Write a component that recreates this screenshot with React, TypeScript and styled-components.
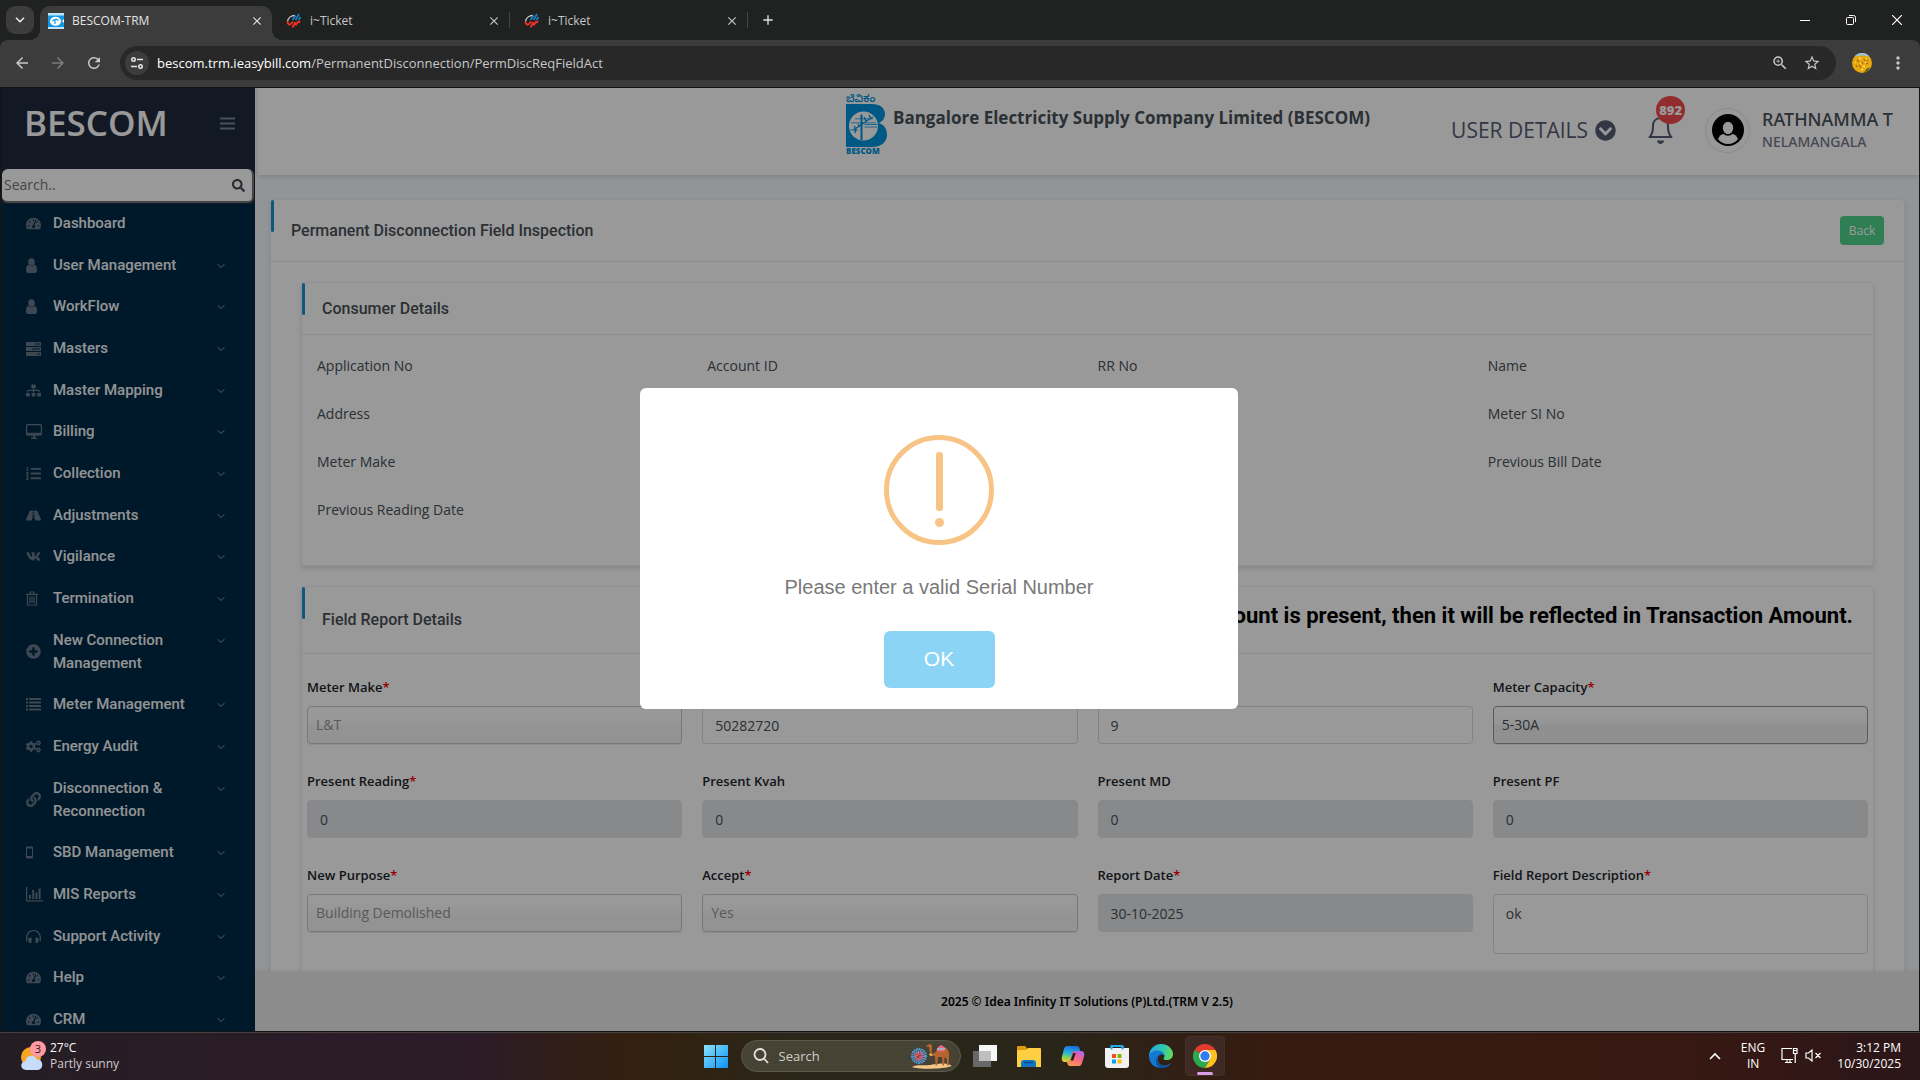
import React from 'react';
import styled, { createGlobalStyle, css } from 'styled-components';
import {
  FaTachometerAlt, FaSitemap, FaListOl, FaRoad, FaVk,
  FaPlusCircle, FaCogs, FaLink, FaHeadphonesAlt, FaChevronCircleDown,
  FaSearch,
} from 'react-icons/fa';
import { FiChevronDown } from 'react-icons/fi';
import {
  MdArrowBack, MdArrowForward, MdRefresh, MdStarBorder, MdMoreVert, MdOutlineZoomIn, MdClose, MdAdd,
} from 'react-icons/md';

const ui = `"Open Sans", "Noto Sans", sans-serif`;
const noto = `"Noto Sans", "Open Sans", sans-serif`;
const roboto = `Roboto, "Liberation Sans", sans-serif`;
const arial = `"Liberation Sans", Arial, sans-serif`;

const GlobalStyle = createGlobalStyle`
  *, *::before, *::after { box-sizing: border-box; }
  body { margin: 0; background: #202121; font-family: ${ui}; overflow: hidden; }
  button, input, select, textarea { font: inherit; margin: 0; }
  button { border: 0; padding: 0; background: none; color: inherit; cursor: pointer; }
  h1, h2, h3, p, ul, dl, dt, dd { margin: 0; padding: 0; }
  a { color: inherit; text-decoration: none; }
  svg { display: block; flex: none; }
`;

const Screen = styled.div`
  display: flex;
  flex-direction: column;
  height: 100vh;
`;

/* ---------- browser frame ---------- */

const TabStrip = styled.div`
  display: flex;
  align-items: center;
  height: 40px;
  padding: 0 6px;
  background: #202121;
  color: #e3e3e3;
`;

const TabSearch = styled.button`
  display: grid;
  place-items: center;
  width: 28px;
  height: 28px;
  margin-right: 6px;
  border-radius: 9px;
  background: #3c3c3c;
`;

const Tab = styled.div<{ $active?: boolean }>`
  position: relative;
  display: flex;
  align-items: center;
  gap: 8px;
  width: ${p => (p.$active ? 232 : 237)}px;
  height: 34px;
  margin-top: 6px;
  padding: 0 8px 5px ${p => (p.$active ? 8 : 14)}px;
  border-radius: 10px 10px 0 0;
  font-size: 12px;
  line-height: 16px;
  background: ${p => (p.$active ? '#3c3c3c' : 'transparent')};
  color: ${p => (p.$active ? '#e3e3e3' : '#c7c7c7')};
  ${p => p.$active && css`
    &::before, &::after {
      content: '';
      position: absolute;
      bottom: 0;
      width: 10px;
      height: 10px;
    }
    &::before { left: -10px; background: radial-gradient(circle at 0 0, transparent 10px, #3c3c3c 10px); }
    &::after { right: -10px; background: radial-gradient(circle at 100% 0, transparent 10px, #3c3c3c 10px); }
  `}
`;

const TabTitle = styled.span`
  flex: 1;
`;

const TabRule = styled.span`
  width: 1px;
  height: 16px;
  background: #444646;
`;

const NewTab = styled.button`
  margin-left: 12px;
`;

const WindowButtons = styled.div`
  display: flex;
  gap: 36px;
  margin-left: auto;
  padding-right: 12px;
`;

const Toolbar = styled.div`
  display: flex;
  align-items: center;
  height: 47px;
  padding: 0 14px 2px;
  border-radius: 8px 8px 0 0;
  background: #3c3c3c;
  color: #c7c7c7;
`;

const NavButtons = styled.div`
  display: flex;
  gap: 18px;
  margin-right: 17px;
  margin-left: -1px;
`;

const NavButton = styled.button`
  &:disabled { color: #7c7c7c; }
`;

const AddressBar = styled.div`
  display: flex;
  flex: 1;
  align-items: center;
  height: 34px;
  padding: 0 15px 0 5px;
  gap: 14px;
  border-radius: 17px;
  background: #282828;
`;

const SiteInfo = styled.button`
  display: grid;
  place-items: center;
  width: 24px;
  height: 24px;
  border-radius: 12px;
  background: #3c3c3c;
`;

const Address = styled.a`
  flex: 1;
  margin-left: -6px;
  font-size: 13px;
  line-height: 20px;
  color: #c7c7c7;
  b { font-weight: 400; color: #fff; }
`;

const ToolbarEnd = styled.div`
  display: flex;
  align-items: center;
  gap: 16px;
  margin: 0 -2px 0 16px;
`;

/* ---------- page ---------- */

const Page = styled.div`
  position: relative;
  display: flex;
  flex: 1;
  min-height: 0;
  border: 1px solid #151515;
  background: #f5f7fa;
`;

const Sidebar = styled.aside`
  display: flex;
  flex-direction: column;
  width: 254px;
  flex: none;
  overflow: hidden;
  background: #002a46;
`;

const Brand = styled.div`
  display: flex;
  align-items: center;
  justify-content: space-between;
  height: 81px;
  padding: 0 20px 11px 23px;
  background: #1f2b3d;
`;

const BrandName = styled.h1`
  font-size: 35px;
  line-height: 48px;
  font-weight: 600;
  color: #fff;
`;

const MenuToggle = styled.button`
  color: #76899c;
`;

const SearchWrap = styled.div`
  padding: 0 1px 1px;
  background: #1f2b3d;
`;

const SearchBox = styled.label`
  display: flex;
  align-items: center;
  height: 34px;
  padding: 0 7px 0 2px;
  border: solid #767676;
  border-width: 0 2px 2px 0;
  border-radius: 6px;
  background: #fff;
  color: #40454c;
  input {
    flex: 1;
    min-width: 0;
    padding: 0;
    border: 0;
    outline: 0;
    background: none;
    font-size: 14px;
    line-height: 20px;
  }
  input::placeholder { color: #757575; opacity: 1; }
`;

const Menu = styled.nav`
  display: flex;
  flex: 1;
  flex-direction: column;
  justify-content: space-between;
  padding: 8px 28px 0 25px;
`;

const MenuItem = styled.a`
  display: flex;
  align-items: center;
  font-family: ${roboto};
  font-size: 15px;
  line-height: 23px;
  font-weight: 500;
  color: #f4f6f8;
  > svg { align-self: flex-start; margin-top: 6px; color: #93a3b2; }
  span { flex: 1; max-width: 136px; margin-right: auto; }
`;

const MenuIcon = styled.i`
  width: 27px;
  color: #67798a;
  svg { height: 15px; }
`;

const Main = styled.div`
  display: flex;
  flex: 1;
  flex-direction: column;
  min-width: 0;
`;

const Header = styled.header`
  position: relative;
  z-index: 1;
  display: flex;
  flex: none;
  align-items: center;
  height: 87px;
  margin-left: 3px;
  padding: 0 26px 3px 588px;
  background: #fff;
  color: #555c70;
  box-shadow: 0 2px 4px rgba(15, 34, 58, 0.12);
`;

const Company = styled.div`
  display: flex;
  align-items: center;
  gap: 5px;
  margin: 0 auto 13px 0;
`;

const CompanyName = styled.h2`
  padding-bottom: 12px;
  font-size: 17px;
  line-height: 24px;
  font-weight: 700;
  color: #495057;
`;

const UserDetails = styled.button`
  display: flex;
  align-items: center;
  gap: 7px;
  font-size: 21px;
  line-height: 32px;
`;

const Bell = styled.button`
  position: relative;
  margin: 0 32px;
`;

const Badge = styled.span`
  position: absolute;
  top: -20px;
  left: 8px;
  width: 29px;
  height: 28px;
  border-radius: 50%;
  background: #f24b4e;
  font-size: 13px;
  line-height: 28px;
  font-weight: 800;
  color: #fff;
  text-align: center;
`;

const Avatar = styled.span`
  display: grid;
  place-items: center;
  width: 45px;
  height: 45px;
  margin-right: 12px;
  border: 1px solid #e6e8ec;
  border-radius: 50%;
`;

const Person = styled.div`
  padding-bottom: 2px;
  font-family: ${noto};
  strong { display: block; font-size: 18px; line-height: 26px; font-weight: 500; color: #495057; }
  span { display: block; font-size: 14px; line-height: 20px; font-weight: 500; color: #74788d; }
`;

const Content = styled.main`
  flex: 1;
  min-height: 0;
  padding: 24px 14px 0 15px;
  overflow: hidden;
`;

const Card = styled.section`
  border: 1px solid #eff0f4;
  border-radius: 4px;
  background: #fff;
  box-shadow: 0 3px 4px rgba(15, 34, 58, 0.12);
`;

const CardHead = styled.div<{ $height: number }>`
  position: relative;
  display: flex;
  align-items: center;
  justify-content: space-between;
  height: ${p => p.$height}px;
  padding: 0 20px;
  border-bottom: 1px solid #e9ebef;
  &::before {
    content: '';
    position: absolute;
    top: 0;
    left: 0;
    width: 3px;
    height: 32px;
    background: #1a92d8;
    border-radius: 2px;
  }
`;

const CardTitle = styled.h3`
  font-family: ${roboto};
  font-size: 16px;
  line-height: 20px;
  font-weight: 500;
  color: #495057;
`;

const Note = styled.p`
  padding-bottom: 8px;
  font-family: ${roboto};
  font-size: 22px;
  line-height: 28px;
  font-weight: 700;
  color: #000;
`;

const BackButton = styled.button`
  width: 44px;
  height: 29px;
  border-radius: 4px;
  background: #51d28c;
  font-size: 12px;
  line-height: 16px;
  color: #fff;
`;

const Stack = styled.div`
  display: flex;
  flex-direction: column;
  gap: 20px;
  padding: 20px 30px;
`;

const Consumer = styled.dl`
  display: grid;
  grid-template-columns: repeat(4, 1fr);
  grid-auto-rows: 48px;
  align-items: center;
  height: 230px;
  padding: 7px 0 0 10px;
  font-size: 14px;
  line-height: 20px;
  color: #495057;
  dt { padding-left: 5px; }
`;

const Fields = styled.form`
  display: grid;
  grid-template-columns: repeat(4, 1fr);
  gap: 27px 20px;
  padding: 23px 5px 40px;
`;

const Field = styled.div`
  display: flex;
  flex-direction: column;
  gap: 9px;
  font-size: 13px;
  line-height: 20px;
  label { font-weight: 600; color: #212529; }
  em { font-style: normal; color: #f00; }
`;

const control = css`
  width: 100%;
  height: 38px;
  padding: 0 12px;
  border: 1px solid #d8dce1;
  border-radius: 4px;
  font-size: 14px;
  line-height: 20px;
  color: #495057;
`;

const Input = styled.input`
  ${control}
  background: #fff;
  &:read-only { background: #e2e5e8; border-color: #e2e5e8; }
`;

const Area = styled.textarea`
  ${control}
  height: 60px;
  padding: 9px 12px;
  background: #fff;
  resize: none;
`;

const Select = styled.select`
  ${control}
  appearance: none;
  padding: 0 8px;
  border-color: #969696;
  background: linear-gradient(#fff 20%, #f6f6f6 50%, #eee 52%, #f2f2f2 100%);
  box-shadow: 0 1px 0 rgba(0, 0, 0, 0.08);
  opacity: 1;
  &:disabled {
    border-color: #c8c8c8;
    background: linear-gradient(#fff 20%, #fafafa 50%, #f5f5f5 52%, #f6f6f6 100%);
    color: #969696;
  }
`;

const Footer = styled.footer`
  position: relative;
  display: grid;
  flex: none;
  place-items: center;
  height: 59px;
  background: #e9e9e9;
  box-shadow: 0 -2px 4px rgba(0, 0, 0, 0.06);
  font-family: ${noto};
  font-size: 12px;
  line-height: 16px;
  font-weight: 600;
  color: #000;
`;

/* ---------- alert ---------- */

const Overlay = styled.div`
  position: absolute;
  inset: 0;
  z-index: 2;
  display: flex;
  align-items: center;
  justify-content: center;
  padding: 0 42px 22px 0;
  background: rgba(0, 0, 0, 0.4);
`;

const Dialog = styled.div`
  display: flex;
  flex-direction: column;
  align-items: center;
  width: 598px;
  padding: 47px 20px 21px;
  border-radius: 6px;
  background: #fff;
  font-family: ${arial};
`;

const Warning = styled.div`
  display: flex;
  flex-direction: column;
  align-items: center;
  gap: 7px;
  width: 110px;
  height: 110px;
  padding-top: 12px;
  border: 5px solid #f8c486;
  border-radius: 50%;
  &::before { content: ''; width: 7px; height: 59px; border-radius: 3px; background: #f8c486; }
  &::after { content: ''; width: 9px; height: 9px; border-radius: 50%; background: #f8c486; }
`;

const Message = styled.p`
  margin: 29px 0 31px;
  font-size: 20px;
  line-height: 26px;
  color: #797979;
`;

const OkButton = styled.button`
  width: 111px;
  height: 57px;
  padding-bottom: 2px;
  border-radius: 6px;
  background: #8cd4f5;
  font-size: 21px;
  line-height: 26px;
  color: #fff;
`;

/* ---------- taskbar ---------- */

const Taskbar = styled.div`
  display: grid;
  grid-template-columns: 1fr auto 1fr;
  align-items: center;
  height: 48px;
  padding: 0 19px 2px;
  border-top: 1px solid #45413f;
  background: linear-gradient(90deg, #261d24 0, #2c1b29 24%, #33200f 33%, #2a271a 42%, #2a2519 55%, #361b11 66%, #371812 88%, #2b1619 100%);
  color: #fff;
  font-size: 12px;
  line-height: 16px;
`;

const Weather = styled.button`
  display: flex;
  align-items: center;
  gap: 4px;
  justify-self: start;
  text-align: left;
  small { display: block; font-size: 12px; color: #cfcaca; }
`;

const WeatherText = styled.span`
  font-size: 12px;
  line-height: 16px;
`;

const Apps = styled.div`
  display: flex;
  align-items: center;
  gap: 20px;
`;

const TaskSearch = styled.label`
  display: flex;
  align-items: center;
  width: 220px;
  height: 32px;
  margin: 0 -8px 0 -7px;
  padding: 0 7px 0 11px;
  gap: 10px;
  border: 1px solid #5c594b;
  border-radius: 16px;
  background: #464234;
  input {
    flex: 1;
    min-width: 0;
    padding: 0;
    border: 0;
    outline: 0;
    background: none;
    color: #fff;
    font-size: 13px;
    line-height: 20px;
  }
  input::placeholder { color: #d0cec8; opacity: 1; }
`;

const AppButton = styled.button<{ $open?: boolean }>`
  position: relative;
  ${p => p.$open && css`
    display: grid;
    place-items: center;
    width: 40px;
    height: 40px;
    margin: 0 -8px;
    border: 1px solid #46302a;
    border-radius: 4px;
    background: #3f2a23;
    &::after {
      content: '';
      position: absolute;
      bottom: 0;
      width: 16px;
      height: 3px;
      border-radius: 2px;
      background: #d9a0e8;
    }
  `}
`;

const Tray = styled.div`
  display: flex;
  align-items: center;
  justify-self: end;
  text-align: center;
`;

const Lang = styled.button`
  margin: 0 16px 0 20px;
`;

const Status = styled.button`
  display: flex;
  gap: 7px;
  margin-right: 15px;
`;

const Clock = styled.button`
  text-align: right;
`;

/* ---------- drawings ---------- */

const BescomMark = () => (
  <svg width="42" height="62" viewBox="0 -2 42 62" aria-hidden="true">
    <text x="0" y="7" fontSize="10" fontWeight="600" fill="#0093dd" fontFamily="Noto Sans Kannada, Noto Sans, sans-serif">ಬೆವಿಕಂ</text>
    <path d="M0 9h26c8 0 13 4 13 10 0 4-2 7-6 9 6 2 8 7 8 12 0 7-6 12-14 12H0z" fill="#0093dd" />
    <circle cx="17.500" cy="31" r="14.500" fill="#fff" />
    <path d="M14.500 19.500h2V45h-2zM9 23.500h18v.8H9zM5 27.500h25v.7H5z" fill="#0093dd" />
    <path d="M18.500 29.500h13M18.500 32h13M4 35h8" stroke="#0093dd" strokeWidth=".8" fill="none" />
    <path d="M7 35l8-5 7-5 5-3M8 31l2 3-1 4M12 29l2 3M18 22l2 4M23 20l2 4" stroke="#0093dd" strokeWidth="1.300" fill="none" />
    <text x="0" y="59" fontSize="8" fontWeight="800" fill="#0093dd" fontFamily="Open Sans, sans-serif">BESCOM</text>
  </svg>
);

const TabMark = () => (
  <svg width="16" height="16" viewBox="0 0 16 16" aria-hidden="true">
    <path d="M0 0h16v16H0z" fill="#1499e0" />
    <path d="M0 0h16v2.500H0zM0 14h16v2H0z" fill="#bfe5fa" />
    <ellipse cx="7.500" cy="8.200" rx="5.500" ry="4.500" fill="#fff" />
    <path d="M7 6v5M4.500 8c2-2 5-2 6-.5" stroke="#1499e0" strokeWidth="1.200" fill="none" />
    <path d="M16 6v4l-2-2z" fill="#fff" />
  </svg>
);

const TicketMark = () => (
  <svg width="16" height="16" viewBox="0 0 16 16" fill="none" aria-hidden="true">
    <path d="M9 2.500C5 2.500 2 5 1.500 8.500" stroke="#cfd3d6" strokeWidth="1.300" />
    <path d="M6.500 7l3-4.500M9.500 7l3.500-6M12.500 7l2-3" stroke="#1f7fc4" strokeWidth="1.700" />
    <path d="M1.500 8.500c0 3 2.500 4 4 2l1.500-2M6.500 14.500L9.500 9M9.500 12.500l3-4.500M12.500 10l1.500-2" stroke="#ee3124" strokeWidth="1.900" />
  </svg>
);

const Tune = () => (
  <svg width="14" height="14" viewBox="0 0 14 14" fill="none" stroke="#e3e3e3" strokeWidth="1.600" aria-hidden="true">
    <circle cx="3.500" cy="3.500" r="1.700" /><path d="M7 3.500h6M1 10.500h6" /><circle cx="10.500" cy="10.500" r="1.700" />
  </svg>
);

const BellIcon = () => (
  <svg width="25" height="29" viewBox="0 0 25 29" fill="none" stroke="#555c70" strokeWidth="2" aria-hidden="true">
    <path d="M12.500 2C7.500 2 5 5.500 5 10c0 5-.5 8.500-3.500 11h22C20.500 18.500 20 15 20 10c0-4.500-2.500-8-7.500-8z" strokeLinejoin="round" />
    <path d="M9 24.500h7c0 2.300-2 3.500-3.500 3.500S9 26.800 9 24.500z" fill="#555c70" stroke="none" />
  </svg>
);

const AvatarIcon = () => (
  <svg width="32" height="32" viewBox="0 0 32 32" aria-hidden="true">
    <circle cx="16" cy="16" r="16" fill="#000" />
    <path d="M6 25c1-3 4-5 6.500-5.500h7c2.500.5 5.500 2.500 6.500 5.500-2.500 3.500-6 5-10 5s-7.500-1.500-10-5z" fill="#fff" />
    <ellipse cx="16" cy="14" rx="6" ry="7" fill="#fff" stroke="#000" strokeWidth="1.600" />
  </svg>
);

const Flowers = () => (
  <svg width="20" height="20" viewBox="0 0 20 20" aria-hidden="true">
    <circle cx="10" cy="10" r="10" fill="#e8a810" />
    <path d="M2.500 3.500a10 10 0 0 1 15 0L14 3l-4-1-4 1z" fill="#8fc3ee" />
    <path d="M5 7l2 2M12 6l1 2M7 12l2 3M14 11l2-1M4 12l1 2M10 9l1 2M15 7l1 1" stroke="#a8690a" strokeWidth="1.300" />
    <path d="M7 5l2 1M14 5l1 1M9 16l2 1M3 9l1 1M11 13l2 1M8 10l1 1M13 9l1 1" stroke="#ffd84d" strokeWidth="1.600" />
    <path d="M12 19.500a10 10 0 0 0 6-5l-3 1z" fill="#3b5a1c" />
  </svg>
);

const WeatherIcon = () => (
  <svg width="27" height="32" viewBox="-1 0 27 32" aria-hidden="true">
    <circle cx="11" cy="17" r="10" fill="#f5a623" />
    <path d="M6 30a4.500 4.500 0 0 1-.5-9A6 6 0 0 1 17 19.500a5.300 5.300 0 0 1 1 10.500z" fill="#c5dcfa" />
    <circle cx="18" cy="9" r="8" fill="#ff99a4" />
    <text x="18" y="13" textAnchor="middle" fontSize="11" fill="#1c1c1c" fontFamily="Open Sans, sans-serif">3</text>
  </svg>
);

const StartIcon = () => (
  <svg width="24" height="24" viewBox="0 0 24 24" aria-hidden="true">
    <defs>
      <linearGradient id="win" x1="0" y1="0" x2="1" y2="1"><stop offset="0" stopColor="#8be2fb" /><stop offset="1" stopColor="#0a93fb" /></linearGradient>
    </defs>
    <path d="M0 1h11v11H0zM12 1h12v11H12zM0 13h11v11H0zM12 13h12v11H12z" fill="url(#win)" />
  </svg>
);

const Camel = () => (
  <svg width="42" height="26" viewBox="0 0 42 26" fill="none" aria-hidden="true">
    <path d="M1 24c6-3 12-1 18-2s16-3 22 1c-8 3-32 4-40 1z" fill="#f3c88a" />
    <circle cx="8" cy="13" r="7" stroke="#4d9bd8" strokeWidth="2" strokeDasharray="1.800 .7" />
    <circle cx="8" cy="13" r="4.500" stroke="#5aa7e0" strokeWidth="3" strokeDasharray="1 .8" />
    <circle cx="8" cy="13" r="2.500" stroke="#ef5a7a" strokeWidth="4" strokeDasharray="1 .5" />
    <path d="M15.500 2.500L19 .8l2 1.200-.3 7.500c1.300 2 3 .5 4.800-2C27 5 29 3.500 31 3.500c3.500 0 6 2.500 6.800 5.500.5 2 .2 4 .2 6l-.5 7.500H36l-.3-6.500-2-2.500L33 22.500h-1.500L31 14h-4l-1 8.500h-1.500L24 13.500c-3-.5-5-2.500-5.500-5.500l-.5-4-2.500-.3z" fill="#b4642c" />
    <path d="M25.500 6.500c1-2.500 3-3.500 4.500-4.500 2 1 3.500 2 4.500 4.500l-2 2h-5z" fill="#f0618c" />
    <path d="M26 6h8" stroke="#7fe0d0" strokeWidth="1.200" />
    <path d="M18.500 11l2.500 1.500" stroke="#f7d154" strokeWidth="1.500" />
  </svg>
);

const TaskViewIcon = () => (
  <svg width="24" height="24" viewBox="0 0 24 24" aria-hidden="true">
    <path d="M0 7h18v16H0z" fill="#68676a" />
    <path d="M6 1h18v16H6z" fill="#f6f6f6" />
    <path d="M6 7h12v10H6z" fill="#c0bfbd" />
  </svg>
);

const ExplorerIcon = () => (
  <svg width="24" height="24" viewBox="0 0 24 24" aria-hidden="true">
    <path d="M0 3a1 1 0 0 1 1-1h7l2 2v4H0z" fill="#dc9a10" />
    <path d="M0 6h9l2-2h12a1 1 0 0 1 1 1v18H0z" fill="#ffcf43" />
    <path d="M4 23v-4a3 3 0 0 1 3-3h9a3 3 0 0 1 3 3v4z" fill="#1374c4" />
    <path d="M7 18.500h9" stroke="#0a5191" strokeWidth="1.500" />
  </svg>
);

const CopilotIcon = () => (
  <svg width="24" height="24" viewBox="0 0 24 24" aria-hidden="true">
    <defs>
      <linearGradient id="cpa" x1="0.500" y1="0" x2="0.300" y2="1"><stop offset="0" stopColor="#1d6fe0" /><stop offset=".45" stopColor="#27b4d8" /><stop offset=".75" stopColor="#8fd24c" /><stop offset="1" stopColor="#f5c52c" /></linearGradient>
      <linearGradient id="cpb" x1="0.800" y1="0" x2="0.300" y2="1"><stop offset="0" stopColor="#b065ee" /><stop offset=".45" stopColor="#f2628c" /><stop offset="1" stopColor="#fb9a4a" /></linearGradient>
    </defs>
    <path d="M6 2h10c1.500 0 2.200 1 2.600 2.500L19 7h-4c-2 0-3 1-3.500 3L10 15c-.6 2-1.500 3-3.500 3H4c-2.500 0-4-2-3-5.500L3 5c.6-2 1.500-3 3-3z" fill="url(#cpa)" />
    <path d="M18 22H9c-1.500 0-2.200-1-2.600-2.500L6 18c2 0 3-1 3.600-3L11 10c.6-2 1.500-3 3.500-3H20c2.500 0 4 2 3 5.500L21 19c-.6 2-1.500 3-3 3z" fill="url(#cpb)" />
    <path d="M12.200 9h2.500l-2.400 7.500H9.500z" fill="#2b1c14" />
  </svg>
);

const StoreIcon = () => (
  <svg width="24" height="24" viewBox="0 0 24 24" aria-hidden="true">
    <path d="M6.500 6V2h11v4" fill="none" stroke="#22a9ef" strokeWidth="2" />
    <path d="M0 4h24v17a3 3 0 0 1-3 3H3a3 3 0 0 1-3-3z" fill="#f1f1f1" />
    <path d="M6.500 5.500V2M17.500 5.500V2" stroke="#22a9ef" strokeWidth="2" />
    <path d="M7 10h4v4H7z" fill="#f25022" /><path d="M12.500 10h4v4h-4z" fill="#7fba00" />
    <path d="M7 15.500h4v4H7z" fill="#00a4ef" /><path d="M12.500 15.500h4v4h-4z" fill="#ffb900" />
  </svg>
);

const EdgeIcon = () => (
  <svg width="24" height="24" viewBox="0 0 24 24" aria-hidden="true">
    <defs>
      <linearGradient id="eg" x1="0" y1=".2" x2="1" y2=".4"><stop offset="0" stopColor="#27a5e4" /><stop offset=".6" stopColor="#2fc7b0" /><stop offset="1" stopColor="#62dc56" /></linearGradient>
    </defs>
    <path d="M0 11C1 4 6 0 12 0c7 0 12 5 12 10 0 4-3 6-6.500 6-3 0-3.500-1.500-2.500-2.500 1.500-2-.5-5.500-4-5.500C6 8 3 9 0 13z" fill="url(#eg)" />
    <path d="M0 12c1-4 5-6 9-5.500 4 .3 6.500 3 6.500 5.500-1-2-4-2-5.500-.5-3 3-1 9 4 10 3 .5 6-.8 8-2.500-2 3.500-6 5-10 5C5 24 0 19 0 12z" fill="#1478d0" />
    <path d="M9 12c-2 4 .5 9 5 9.800 3 .5 6-.8 8-2.800-2 3.500-5 5-9 5-6 0-8-8-4-12z" fill="#0d4f9e" />
  </svg>
);

const ChromeIcon = () => (
  <svg width="24" height="24" viewBox="0 0 24 24" aria-hidden="true">
    <path d="M12 12L1.600 6A12 12 0 0 1 22.400 6H12z" fill="#e33b2e" />
    <path d="M12 12L1.600 6a12 12 0 0 0 10.400 18l5.200-9z" fill="#2da94f" />
    <path d="M12 24a12 12 0 0 0 10.400-18H12l5.200 9z" fill="#fcc31e" />
    <circle cx="12" cy="12" r="6" fill="#fff" />
    <circle cx="12" cy="12" r="4.700" fill="#2f7df0" />
  </svg>
);

const UserGlyph = () => (
  <svg width="11" viewBox="0 0 11 15" fill="currentColor"><ellipse cx="5.500" cy="4" rx="3.300" ry="3.800" /><path d="M2.500 6.800C.8 7 0 9 0 12c0 2 .8 3 2.200 3h6.600C10.200 15 11 14 11 12c0-3-.8-5-2.500-5.200C7 8.500 4 8.500 2.500 6.800z" /></svg>
);
const TasksGlyph = () => (
  <svg width="15" viewBox="0 0 15 15" fill="currentColor"><path fillRule="evenodd" d="M0 1h15v4H0zM9 2.500v1h5v-1zM0 6h15v4H0zM6 7.500v1h8v-1zM0 11h15v4H0zM11 12.500v1h3v-1z" /></svg>
);
const DesktopGlyph = () => (
  <svg width="16" viewBox="0 0 16 15" fill="none" stroke="currentColor" strokeWidth="1.200"><rect x=".6" y=".6" width="14.800" height="10.500" rx="1" /><path d="M1 9.800h14" strokeWidth="2" /><path d="M5 14.300h6M8 11v3" strokeWidth="1.800" /></svg>
);
const TrashGlyph = () => (
  <svg width="12" viewBox="0 0 12 15" fill="none" stroke="currentColor" strokeWidth="1.200"><path d="M0 3.300h12M1.500 3.500V14h9V3.500M4 3V1h4v2M4 5.500v6.500M6 5.500v6.500M8 5.500v6.500" /></svg>
);
const ListGlyph = () => (
  <svg width="15" viewBox="0 0 15 15" fill="currentColor"><path d="M0 1h2v2H0zM0 4.500h2v2H0zM0 8h2v2H0zM0 11.500h2v2H0zM3 1h12v2H3zM3 4.500h12v2H3zM3 8h12v2H3zM3 11.500h12v2H3z" /></svg>
);
const MobileGlyph = () => (
  <svg width="7" viewBox="0 0 7 15" fill="currentColor"><path fillRule="evenodd" d="M1 1.500h5a1 1 0 0 1 1 1v10a1 1 0 0 1-1 1H1a1 1 0 0 1-1-1v-10a1 1 0 0 1 1-1zM1 3.500v7.500h5V3.500z" /></svg>
);
const ChartGlyph = () => (
  <svg width="17" viewBox="0 0 17 15" fill="none" stroke="currentColor"><path d="M.6 0v13.900H17" strokeWidth="1.200" /><path d="M4 12V8M7.200 12V3M10.400 12V5.500M13.600 12V1.500" strokeWidth="2" /></svg>
);

/* ---------- data ---------- */

const menu: [string, React.ComponentType][] = [
  ['Dashboard', FaTachometerAlt], ['User Management', UserGlyph], ['WorkFlow', UserGlyph], ['Masters', TasksGlyph],
  ['Master Mapping', FaSitemap], ['Billing', DesktopGlyph], ['Collection', FaListOl], ['Adjustments', FaRoad],
  ['Vigilance', FaVk], ['Termination', TrashGlyph], ['New Connection Management', FaPlusCircle],
  ['Meter Management', ListGlyph], ['Energy Audit', FaCogs], ['Disconnection & Reconnection', FaLink],
  ['SBD Management', MobileGlyph], ['MIS Reports', ChartGlyph], ['Support Activity', FaHeadphonesAlt],
  ['Help', FaTachometerAlt], ['CRM', FaTachometerAlt],
];

const consumer = [
  'Application No', 'Account ID', 'RR No', 'Name',
  'Address', '', '', 'Meter SI No',
  'Meter Make', '', '', 'Previous Bill Date',
  'Previous Reading Date',
];

type FieldSpec = { id: string; label: string; kind: 'select' | 'input' | 'area'; value: string; req?: boolean; locked?: boolean };

const fields: FieldSpec[] = [
  { id: 'make', label: 'Meter Make', kind: 'select', value: 'L&T', req: true, locked: true },
  { id: 'serial', label: 'Serial Number', kind: 'input', value: '50282720', req: true },
  { id: 'digits', label: 'Meter Digits', kind: 'input', value: '9', req: true },
  { id: 'capacity', label: 'Meter Capacity', kind: 'select', value: '5-30A', req: true },
  { id: 'reading', label: 'Present Reading', kind: 'input', value: '0', req: true, locked: true },
  { id: 'kvah', label: 'Present Kvah', kind: 'input', value: '0', locked: true },
  { id: 'md', label: 'Present MD', kind: 'input', value: '0', locked: true },
  { id: 'pf', label: 'Present PF', kind: 'input', value: '0', locked: true },
  { id: 'purpose', label: 'New Purpose', kind: 'select', value: 'Building Demolished', req: true, locked: true },
  { id: 'accept', label: 'Accept', kind: 'select', value: 'Yes', req: true, locked: true },
  { id: 'date', label: 'Report Date', kind: 'input', value: '30-10-2025', req: true, locked: true },
  { id: 'description', label: 'Field Report Description', kind: 'area', value: 'ok', req: true },
];

const FormField = ({ id, label, kind, value, req, locked }: FieldSpec) => (
  <Field>
    <label htmlFor={id}>{label}{req && <em>*</em>}</label>
    {kind === 'select' && <Select id={id} disabled={locked}><option>{value}</option></Select>}
    {kind === 'input' && <Input id={id} defaultValue={value} readOnly={locked} />}
    {kind === 'area' && <Area id={id} defaultValue={value} />}
  </Field>
);

export default function App() {
  return (
    <Screen>
      <GlobalStyle />
      <TabStrip>
        <TabSearch aria-label="Search tabs"><FiChevronDown size={14} strokeWidth={3} /></TabSearch>
        <Tab $active><TabMark /><TabTitle>BESCOM-TRM</TabTitle><MdClose size={14} /></Tab>
        <Tab><TicketMark /><TabTitle>i~Ticket</TabTitle><MdClose size={14} /></Tab>
        <TabRule />
        <Tab><TicketMark /><TabTitle>i~Ticket</TabTitle><MdClose size={14} /></Tab>
        <TabRule />
        <NewTab aria-label="New tab"><MdAdd size={16} /></NewTab>
        <WindowButtons>
          <button aria-label="Minimize"><svg width="10" height="10" viewBox="0 0 10 10"><path d="M0 5.500h10" stroke="#fff" /></svg></button>
          <button aria-label="Restore"><svg width="10" height="10" viewBox="0 0 10 10" fill="none" stroke="#fff"><rect x=".5" y="2.500" width="7" height="7" rx="1" /><path d="M3 .5h4.500a2 2 0 0 1 2 2V7" /></svg></button>
          <button aria-label="Close"><svg width="10" height="10" viewBox="0 0 10 10"><path d="M0 0l10 10M10 0L0 10" stroke="#fff" strokeWidth="1.200" /></svg></button>
        </WindowButtons>
      </TabStrip>
      <Toolbar>
        <NavButtons>
          <NavButton aria-label="Back"><MdArrowBack size={18} /></NavButton>
          <NavButton aria-label="Forward" disabled><MdArrowForward size={18} /></NavButton>
          <NavButton aria-label="Reload"><MdRefresh size={18} /></NavButton>
        </NavButtons>
        <AddressBar>
          <SiteInfo aria-label="Site information"><Tune /></SiteInfo>
          <Address href="#"><b>bescom.trm.ieasybill.com</b>/PermanentDisconnection/PermDiscReqFieldAct</Address>
          <button aria-label="Zoom"><MdOutlineZoomIn size={18} /></button>
          <button aria-label="Bookmark"><MdStarBorder size={18} /></button>
        </AddressBar>
        <ToolbarEnd>
          <button aria-label="Profile"><Flowers /></button>
          <button aria-label="Menu"><MdMoreVert size={20} /></button>
        </ToolbarEnd>
      </Toolbar>

      <Page>
        <Sidebar>
          <Brand>
            <BrandName>BESCOM</BrandName>
            <MenuToggle aria-label="Toggle menu">
              <svg width="15" height="13" viewBox="0 0 15 13" fill="none" stroke="currentColor" strokeWidth="2"><path d="M0 1.500h15M0 6.500h15M0 11.500h15" /></svg>
            </MenuToggle>
          </Brand>
          <SearchWrap>
            <SearchBox><input placeholder="Search.." aria-label="Search menu" /><FaSearch size={13} /></SearchBox>
          </SearchWrap>
          <Menu>
            {menu.map(([label, Icon], i) => (
              <MenuItem href="#" key={label}>
                <MenuIcon><Icon /></MenuIcon><span>{label}</span>{i > 0 && <FiChevronDown size={12} />}
              </MenuItem>
            ))}
          </Menu>
        </Sidebar>

        <Main>
          <Header>
            <Company>
              <BescomMark />
              <CompanyName>Bangalore Electricity Supply Company Limited (BESCOM)</CompanyName>
            </Company>
            <UserDetails>USER DETAILS<FaChevronCircleDown size={21} /></UserDetails>
            <Bell aria-label="Notifications"><BellIcon /><Badge>892</Badge></Bell>
            <Avatar><AvatarIcon /></Avatar>
            <Person><strong>RATHNAMMA T</strong><span>NELAMANGALA</span></Person>
          </Header>
          <Content>
            <Card>
              <CardHead $height={62}>
                <CardTitle>Permanent Disconnection Field Inspection</CardTitle>
                <BackButton>Back</BackButton>
              </CardHead>
              <Stack>
                <Card>
                  <CardHead $height={52}><CardTitle>Consumer Details</CardTitle></CardHead>
                  <Consumer>{consumer.map((c, i) => <dt key={i}>{c}</dt>)}</Consumer>
                </Card>
                <Card>
                  <CardHead $height={67}>
                    <CardTitle>Field Report Details</CardTitle>
                    <Note>Note: If Amount is present, then it will be reflected in Transaction Amount.</Note>
                  </CardHead>
                  <Fields>{fields.map(f => <FormField key={f.id} {...f} />)}</Fields>
                </Card>
              </Stack>
            </Card>
          </Content>
          <Footer>2025 © Idea Infinity IT Solutions (P)Ltd.(TRM V 2.5)</Footer>
        </Main>

        <Overlay>
          <Dialog role="alertdialog" aria-describedby="alert-text">
            <Warning />
            <Message id="alert-text">Please enter a valid Serial Number</Message>
            <OkButton>OK</OkButton>
          </Dialog>
        </Overlay>
      </Page>

      <Taskbar>
        <Weather>
          <WeatherIcon />
          <WeatherText>27°C<small>Partly sunny</small></WeatherText>
        </Weather>
        <Apps>
          <AppButton aria-label="Start"><StartIcon /></AppButton>
          <TaskSearch>
            <svg width="16" height="16" viewBox="0 0 16 16" fill="none" stroke="#e4e2dc" strokeWidth="1.800"><circle cx="7" cy="6.500" r="5.500" /><path d="M11 10.500l4 4.500" /></svg>
            <input placeholder="Search" aria-label="Search" />
            <Camel />
          </TaskSearch>
          <AppButton aria-label="Task view"><TaskViewIcon /></AppButton>
          <AppButton aria-label="File Explorer"><ExplorerIcon /></AppButton>
          <AppButton aria-label="Copilot"><CopilotIcon /></AppButton>
          <AppButton aria-label="Store"><StoreIcon /></AppButton>
          <AppButton aria-label="Edge"><EdgeIcon /></AppButton>
          <AppButton aria-label="Chrome" $open><ChromeIcon /></AppButton>
        </Apps>
        <Tray>
          <button aria-label="Hidden icons"><svg width="12" height="8" viewBox="0 0 12 8" fill="none" stroke="#fff" strokeWidth="1.600"><path d="M1 7l5-5 5 5" /></svg></button>
          <Lang>ENG<br />IN</Lang>
          <Status aria-label="Network and volume">
            <svg width="17" height="17" viewBox="0 0 17 17" fill="none" stroke="#fff" strokeWidth="1.200"><path d="M11 1.500H1v11h11M4 15.500h7M6 12.500v3M9 12.500v3M12.500 1.500h3.500v5h-3.500zM14.200 6.500V16M12.500 3.500H16" /></svg>
            <svg width="17" height="17" viewBox="0 0 17 17" fill="none" stroke="#fff" strokeWidth="1.200"><path d="M1 6v5h2.500L7 14V3L3.500 6zM10.500 6l5 5M15.500 6l-5 5" /></svg>
          </Status>
          <Clock>3:12 PM<br />10/30/2025</Clock>
        </Tray>
      </Taskbar>
    </Screen>
  );
}
